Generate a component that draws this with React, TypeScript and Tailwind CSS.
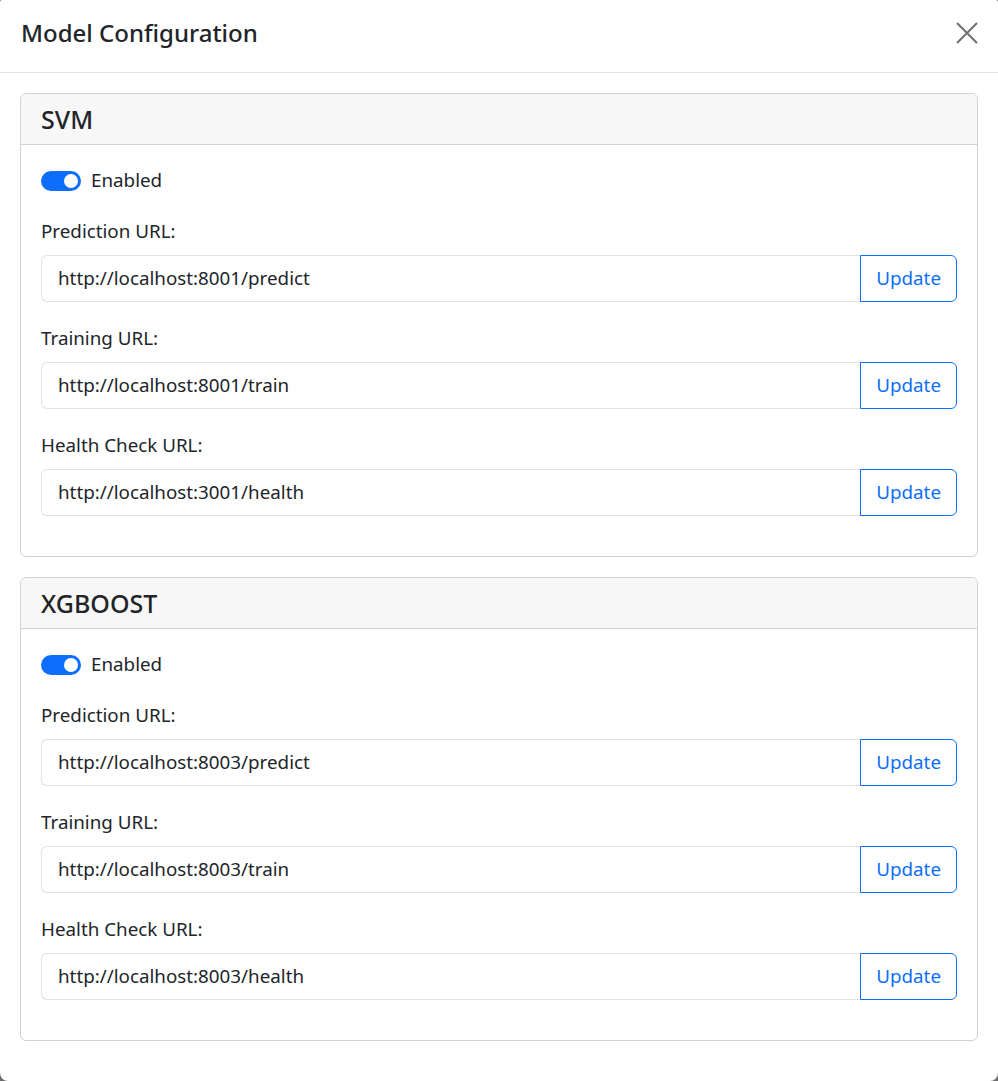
import { useState } from 'react';

type Model = {
  name: string;
  enabled: boolean;
  predict: string;
  train: string;
  health: string;
};

const initial: Model[] = [
  {
    name: 'SVM',
    enabled: true,
    predict: 'http://localhost:8001/predict',
    train: 'http://localhost:8001/train',
    health: 'http://localhost:3001/health',
  },
  {
    name: 'XGBOOST',
    enabled: true,
    predict: 'http://localhost:8003/predict',
    train: 'http://localhost:8003/train',
    health: 'http://localhost:8003/health',
  },
];

function UrlField({ label, value, onChange }: { label: string; value: string; onChange: (v: string) => void }) {
  return (
    <div className="mb-[23px]">
      <label className="block mb-[10px] h-[27px] leading-[27px]">{label}</label>
      <div className="flex h-[47px]">
        <input
          type="text"
          value={value}
          onChange={(e) => onChange(e.target.value)}
          className="flex-1 min-w-0 border border-[#dee2e6] border-r-0 rounded-l-md px-4 text-[#212529] focus:outline-none"
        />
        <button className="px-[15px] border border-[#0d6efd] text-[#0d6efd] rounded-r-md hover:bg-[#0d6efd] hover:text-white">
          Update
        </button>
      </div>
    </div>
  );
}

function ModelCard({ model, onChange }: { model: Model; onChange: (m: Model) => void }) {
  return (
    <div className="border border-[#d2d2d2] rounded-md mb-5">
      <div className="bg-[#f7f7f7] border-b border-[#d2d2d2] rounded-t-md px-5 h-[51px] flex items-center">
        <h4 className="text-[25px] font-medium leading-none">{model.name}</h4>
      </div>
      <div className="px-5 pt-[22px] pb-[17px]">
        <label className="flex items-center gap-[10px] h-[27px] leading-[27px] mb-6 cursor-pointer">
          <button
            onClick={() => onChange({ ...model, enabled: !model.enabled })}
            className={`w-10 h-5 rounded-full flex items-center px-[3px] ${
              model.enabled ? 'bg-[#0d6efd] justify-end' : 'bg-white border border-[#c4c8cc] justify-start'
            }`}
          >
            <span className={`w-[14px] h-[14px] rounded-full ${model.enabled ? 'bg-white' : 'bg-[#c4c8cc]'}`} />
          </button>
          <span>Enabled</span>
        </label>
        <UrlField label="Prediction URL:" value={model.predict} onChange={(v) => onChange({ ...model, predict: v })} />
        <UrlField label="Training URL:" value={model.train} onChange={(v) => onChange({ ...model, train: v })} />
        <UrlField label="Health Check URL:" value={model.health} onChange={(v) => onChange({ ...model, health: v })} />
      </div>
    </div>
  );
}

export default function App() {
  const [models, setModels] = useState(initial);

  return (
    <div
      className="min-h-[1081px] bg-[#6b6b6b] text-[18.8px] text-[#212529]"
      style={{ fontFamily: '"Segoe UI", "Noto Sans", "Open Sans", sans-serif' }}
    >
      <div className="bg-white rounded-b-lg rounded-t-[2px]">
        {/* Header */}
        <div className="h-[73px] border-b border-[#dee2e6] flex items-center justify-between pl-[21px] pr-[19px] pb-[6px]">
          <h5 className="text-[24px] font-medium">Model Configuration</h5>
          <button className="w-6 h-6 flex items-center justify-center text-[#6f6f6f] hover:text-black">
            <svg width="22" height="22" viewBox="0 0 22 22" fill="none" stroke="currentColor" strokeWidth="2">
              <path d="M1 1 L21 21 M21 1 L1 21" />
            </svg>
          </button>
        </div>

        {/* Body */}
        <div className="px-5 pt-5 pb-5">
          {models.map((m, i) => (
            <ModelCard
              key={m.name}
              model={m}
              onChange={(nm) => setModels(models.map((x, j) => (j === i ? nm : x)))}
            />
          ))}
        </div>
      </div>
    </div>
  );
}
